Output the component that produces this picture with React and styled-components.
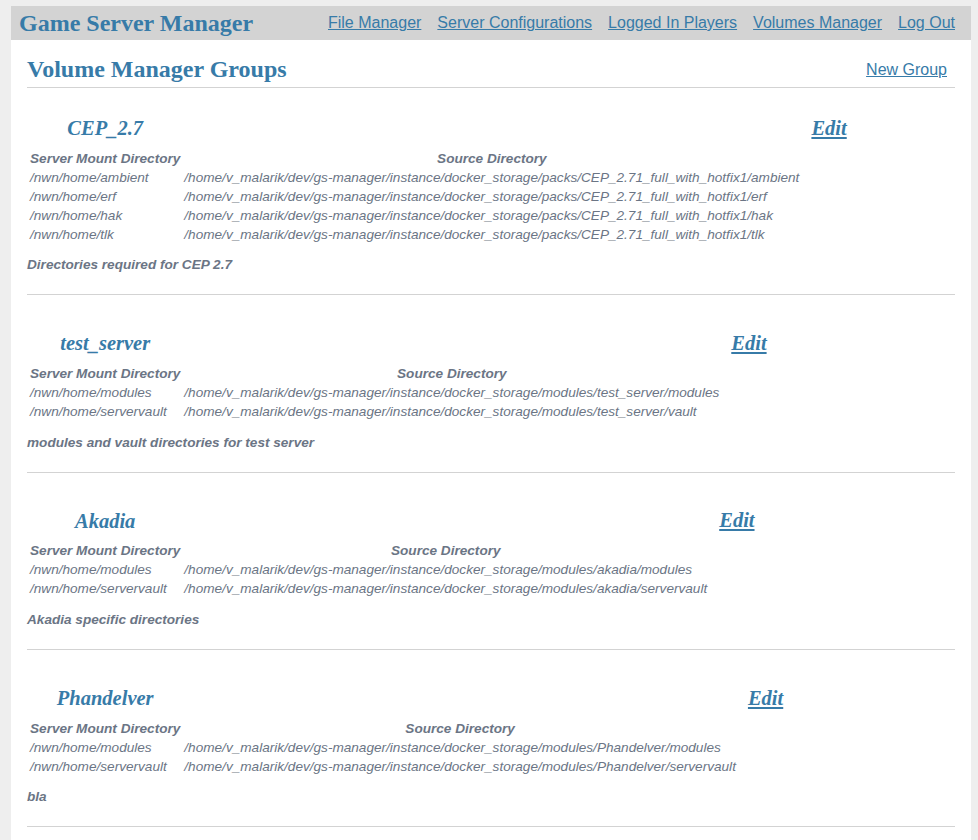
import React from "react";
import styled, { createGlobalStyle } from "styled-components";

const Global = createGlobalStyle`
  html {
    background: #eee;
    scrollbar-width: none;
  }
  html::-webkit-scrollbar { display: none; }
  body {
    margin: 0;
    padding: 6px 0 0 11px;
    font-family: "Liberation Sans", Arial, sans-serif;
  }
`;

const Page = styled.div`
  width: 960px;
  background: #fff;
`;

const Nav = styled.nav`
  background: lightgray;
  display: flex;
  align-items: center;
  padding: 0 8px;
`;

const Brand = styled.h1`
  flex: auto;
  margin: 0;
  font-family: "Liberation Serif", "Times New Roman", serif;
  font-size: 24px;
  font-weight: bold;
  color: #377ba8;
`;

const NavList = styled.ul`
  display: flex;
  list-style: none;
  margin: 0;
  padding: 0;
`;

const NavLink = styled.a`
  display: block;
  padding: 8px;
  font-size: 16px;
  color: #377ba8;
  text-decoration: underline;
`;

const Content = styled.section`
  padding: 0 16px 16px;
`;

const Header = styled.header`
  display: flex;
  align-items: flex-end;
  border-bottom: 1px solid lightgray;
`;

const PageTitle = styled.h1`
  flex: auto;
  margin: 16px 0 4px;
  font-family: "Liberation Serif", "Times New Roman", serif;
  font-size: 24px;
  font-weight: bold;
  color: #377ba8;
`;

const Action = styled.a`
  display: block;
  padding: 8px;
  font-size: 16px;
  color: #377ba8;
  text-decoration: underline;
`;

const Group = styled.article`
  padding-top: 18.7px;
`;

const VolumeTable = styled.table`
  border-collapse: separate;
  border-spacing: 2px;
  color: #6b7585;
  font-size: 13.6px;
  font-style: italic;
`;

const TitleCell = styled.th`
  padding: 1px;
  text-align: center;
  vertical-align: middle;
  font-family: "Liberation Serif", "Times New Roman", serif;
  font-size: 20.5px;
  line-height: 24px;
  font-weight: bold;
  font-style: italic;
  color: #377ba8;
`;

const EditLink = styled.a`
  display: block;
  padding: 6px 8px 7px;
  color: #377ba8;
  text-decoration: underline;
`;

const HeadCell = styled.th`
  padding: 1px;
  line-height: 15px;
  text-align: center;
  font-weight: bold;
`;

const Cell = styled.td`
  padding: 1px;
  line-height: 15px;
  white-space: nowrap;
`;

const Description = styled.p`
  margin: 12.6px 0 21px;
  font-size: 13.6px;
  line-height: 16px;
  font-weight: bold;
  font-style: italic;
  color: #6b7585;
`;

const Rule = styled.hr`
  border: none;
  border-top: 1px solid lightgray;
  margin: 8px 0;
`;

const BASE = "/home/v_malarik/dev/gs-manager/instance/docker_storage";

const groups = [
  {
    name: "CEP_2.7",
    description: "Directories required for CEP 2.7",
    volumes: ["ambient", "erf", "hak", "tlk"].map((d) => [
      `/nwn/home/${d}`,
      `${BASE}/packs/CEP_2.71_full_with_hotfix1/${d}`,
    ]),
  },
  {
    name: "test_server",
    description: "modules and vault directories for test server",
    volumes: [
      ["/nwn/home/modules", `${BASE}/modules/test_server/modules`],
      ["/nwn/home/servervault", `${BASE}/modules/test_server/vault`],
    ],
  },
  {
    name: "Akadia",
    description: "Akadia specific directories",
    volumes: [
      ["/nwn/home/modules", `${BASE}/modules/akadia/modules`],
      ["/nwn/home/servervault", `${BASE}/modules/akadia/servervault`],
    ],
  },
  {
    name: "Phandelver",
    description: "bla",
    volumes: [
      ["/nwn/home/modules", `${BASE}/modules/Phandelver/modules`],
      ["/nwn/home/servervault", `${BASE}/modules/Phandelver/servervault`],
    ],
  },
];

const navItems = [
  "File Manager",
  "Server Configurations",
  "Logged In Players",
  "Volumes Manager",
  "Log Out",
];

export default function App() {
  return (
    <>
      <Global />
      <Page>
        <Nav>
          <Brand>Game Server Manager</Brand>
          <NavList>
            {navItems.map((t) => (
              <li key={t}>
                <NavLink href="#">{t}</NavLink>
              </li>
            ))}
          </NavList>
        </Nav>
        <Content>
          <Header>
            <PageTitle>Volume Manager Groups</PageTitle>
            <Action href="#">New Group</Action>
          </Header>
          {groups.map((g) => (
            <Group key={g.name}>
              <VolumeTable>
                <thead>
                  <tr>
                    <TitleCell>{g.name}</TitleCell>
                    <TitleCell />
                    <TitleCell>
                      <EditLink href="#">Edit</EditLink>
                    </TitleCell>
                  </tr>
                  <tr>
                    <HeadCell>Server Mount Directory</HeadCell>
                    <HeadCell>Source Directory</HeadCell>
                  </tr>
                </thead>
                <tbody>
                  {g.volumes.map(([mount, src]) => (
                    <tr key={mount}>
                      <Cell>{mount}</Cell>
                      <Cell>{src}</Cell>
                    </tr>
                  ))}
                </tbody>
              </VolumeTable>
              <Description>{g.description}</Description>
              <Rule />
            </Group>
          ))}
        </Content>
      </Page>
    </>
  );
}
